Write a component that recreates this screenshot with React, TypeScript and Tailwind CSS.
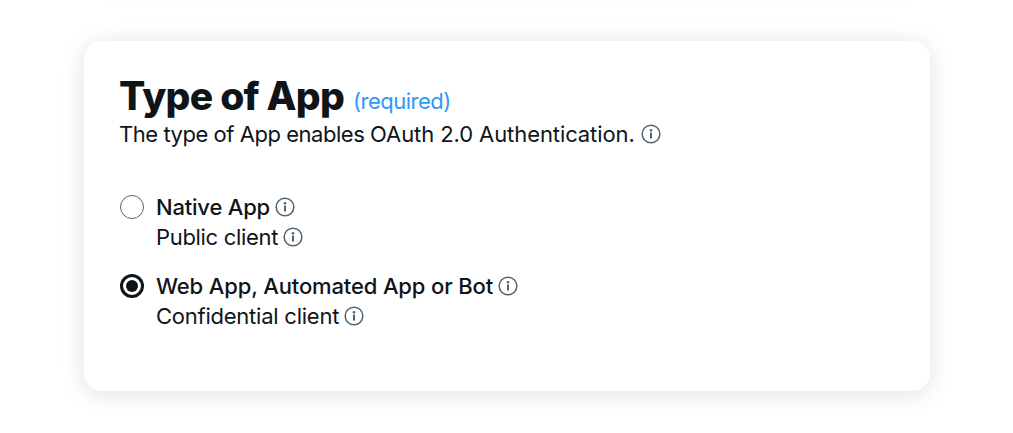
import type { ReactNode } from "react";

function InfoIcon() {
  return (
    <svg className="size-5 shrink-0" viewBox="0 0 20 20" fill="none" role="img" aria-label="Info">
      <circle cx="10" cy="10" r="8.85" stroke="#536471" strokeWidth="1.5" />
      <circle cx="10" cy="6.2" r="1.3" fill="#536471" />
      <path d="M9 8.6h2v6H9z" fill="#536471" />
    </svg>
  );
}

function Radio({ checked }: { checked: boolean }) {
  return checked ? (
    <span className="flex size-6 shrink-0 items-center justify-center rounded-full border-3 border-[#0f1419]">
      <span className="size-3 rounded-full bg-[#0f1419]" />
    </span>
  ) : (
    <span className="size-6 shrink-0 rounded-full border border-[#536471]" />
  );
}

function Option({ checked = false, title, detail }: { checked?: boolean; title: ReactNode; detail: ReactNode }) {
  return (
    <div className="flex gap-3" role="radio" aria-checked={checked}>
      <div className="flex h-[30px] items-center">
        <Radio checked={checked} />
      </div>
      <div>
        <div className="flex h-[30px] items-center gap-[5px] font-medium">
          {title}
          <InfoIcon />
        </div>
        <div className="flex h-[30px] items-center gap-[5px]">
          {detail}
          <InfoIcon />
        </div>
      </div>
    </div>
  );
}

export default function App() {
  return (
    <main className="h-[433px] overflow-hidden bg-white pl-[84px] font-['Inter',sans-serif] text-[22px] leading-[30px] whitespace-nowrap text-[#0f1419]">
      <div className="mb-10 ml-4 h-px w-[814px] bg-[#fcfcfc]" />
      <section className="h-[350px] w-[846px] rounded-[18px] bg-white px-9 pt-[31px] shadow-[0_3px_24px_rgba(0,0,0,0.12)]">
        <div className="-ml-px flex h-[47px] items-baseline">
          <h1 className="w-[234px] text-[39px] leading-12 font-extrabold tracking-[-0.75px]">Type of App</h1>
          <span className="-translate-y-px tracking-[-0.5px] text-[#2f99f3]">(required)</span>
        </div>
        <div className="flex h-[30px] items-center gap-[6px]">
          <p className="-ml-px tracking-[-0.09px]">
            <span className="tracking-[-0.46px]">The type of App enables </span>
            OAuth 2.0 Authentication.
          </p>
          <InfoIcon />
        </div>
        <div className="mt-[43px] flex flex-col gap-[19px]" role="radiogroup">
          <Option
            title={<span className="tracking-[-0.2px]">Native App</span>}
            detail={<span className="tracking-[-0.32px]">Public client</span>}
          />
          <Option
            checked
            title={<span className="tracking-[-0.14px]">Web App, Automated App or Bot</span>}
            detail={<span className="tracking-[-0.24px]">Confidential client</span>}
          />
        </div>
      </section>
    </main>
  );
}
